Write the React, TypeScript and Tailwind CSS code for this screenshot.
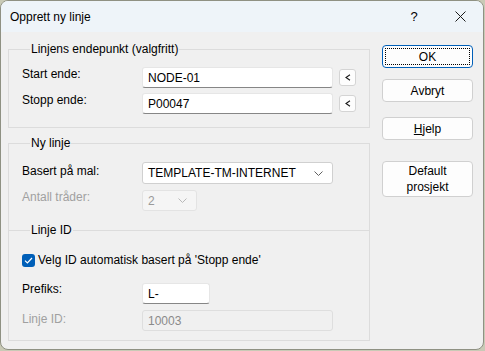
import React from "react"

const font = { fontFamily: '"Liberation Sans", Arial, sans-serif' }

function TextBox({ value, width, disabled }: { value: string; width: string; disabled?: boolean }) {
  if (disabled) {
    return (
      <div className={`${width} h-[21px] rounded-[3px] border border-[#dedede] bg-[#f0f0f0] px-[5px] flex items-center text-[12px] text-[#8a8a8a]`}>
        {value}
      </div>
    )
  }
  return (
    <div className={`${width} h-[21px] rounded-[3px] border border-[#e6e6e6] border-b-[#868686] bg-white px-[5px] flex items-center text-[12px] text-black`}>
      {value}
    </div>
  )
}

function Chevron({ color }: { color: string }) {
  return (
    <svg width="9" height="5" viewBox="0 0 9 5" fill="none">
      <path d="M0.5 0.5 L4.5 4.5 L8.5 0.5" stroke={color} strokeWidth="1" />
    </svg>
  )
}

function PickButton() {
  return (
    <div className="ml-[6px] mt-[2px] w-[17px] h-[17px] rounded-[3px] border border-[#d4d4d4] bg-[#fdfdfd] flex items-center justify-center">
      <svg width="6" height="7" viewBox="0 0 6 7">
        <path d="M5 0.8 L1 3.5 L5 6.2" stroke="#1a1a1a" strokeWidth="1.1" fill="none" />
      </svg>
    </div>
  )
}

function DlgButton({ children, h = "h-[23px]", focused }: { children: React.ReactNode; h?: string; focused?: boolean }) {
  return (
    <div
      className={`w-[91px] ${h} rounded-[4px] border bg-[#fdfdfd] flex items-center justify-center text-center text-[12px] leading-[16px] text-black p-[2px] ${
        focused ? "border-[#005fb8]" : "border-[#d0d0d0]"
      }`}
    >
      <div className={`w-full h-full flex items-center justify-center ${focused ? "border border-dotted border-black" : ""}`}>
        {children}
      </div>
    </div>
  )
}

export default function App() {
  return (
    <div className="w-[485px] h-[351px] bg-[#c9cab6]" style={font}>
      <div className="w-[484px] h-[350px] rounded-[8px] border border-[#8f9183] bg-[#f0f0f0] overflow-hidden flex flex-col">
        {/* Title bar */}
        <div className="h-[31px] bg-[#eef4f9] flex items-center pl-[9px] text-[12px] text-black shrink-0">
          <span className="flex-1">Opprett ny linje</span>
          <span className="w-[46px] text-center text-[13px]">?</span>
          <div className="w-[46px] flex justify-center">
            <svg width="11" height="11" viewBox="0 0 11 11">
              <path d="M0.5 0.5 L10.5 10.5 M10.5 0.5 L0.5 10.5" stroke="#1a1a1a" strokeWidth="1" />
            </svg>
          </div>
        </div>

        <div className="flex">
          {/* Left column */}
          <div className="pl-[7px] w-[369px] text-[12px] leading-[16px] text-black">
            <fieldset className="mt-[9px] border border-[#dcdcdc] pl-[13px] pb-[13px]">
              <legend className="ml-[8px] px-[1px]">Linjens endepunkt (valgfritt)</legend>
              <div className="mt-[10px] flex items-start">
                <span className="w-[120px] -mt-[1px]">Start ende:</span>
                <TextBox value="NODE-01" width="w-[191px]" />
                <PickButton />
              </div>
              <div className="mt-[5px] flex items-start">
                <span className="w-[120px] -mt-[1px]">Stopp ende:</span>
                <TextBox value="P00047" width="w-[191px]" />
                <PickButton />
              </div>
            </fieldset>

            <fieldset className="mt-[7px] h-[95px] border border-b-0 border-[#dcdcdc] pl-[13px]">
              <legend className="ml-[8px] px-[1px]">Ny linje</legend>
              <div className="mt-[11px] flex items-start">
                <span className="w-[120px] mt-[1px]">Basert på mal:</span>
                <div className="w-[191px] h-[22px] rounded-[3px] border border-[#d0d0d0] bg-white pl-[5px] pr-[9px] flex items-center justify-between">
                  <span>TEMPLATE-TM-INTERNET</span>
                  <Chevron color="#606060" />
                </div>
              </div>
              <div className="mt-[6px] flex items-start">
                <span className="w-[120px] -mt-[1px] text-[#a0a0a0]">Antall tråder:</span>
                <div className="w-[55px] h-[21px] rounded-[3px] border border-[#e3e3e3] bg-[#f5f5f5] pl-[5px] pr-[9px] flex items-center justify-between text-[#9a9a9a]">
                  <span>2</span>
                  <Chevron color="#b8b8b8" />
                </div>
              </div>
            </fieldset>

            <fieldset className="-mt-[8px] border border-[#dcdcdc] pl-[13px] pb-[9px]">
              <legend className="ml-[8px] px-[1px]">Linje ID</legend>
              <div className="mt-[14px] h-[16px] flex items-center gap-[3px]">
                <div className="w-[13px] h-[13px] rounded-[3px] bg-[#005fb8] flex items-center justify-center">
                  <svg width="9" height="7" viewBox="0 0 9 7">
                    <path d="M1 3.6 L3.4 6 L8 1" stroke="white" strokeWidth="1.2" fill="none" />
                  </svg>
                </div>
                <span>Velg ID automatisk basert på 'Stopp ende'</span>
              </div>
              <div className="mt-[15px] flex items-start">
                <span className="w-[120px] -mt-[2px]">Prefiks:</span>
                <TextBox value="L-" width="w-[68px]" />
              </div>
              <div className="mt-[6px] flex items-start">
                <span className="w-[120px] mt-[1px] text-[#a0a0a0]">Linje ID:</span>
                <TextBox value="10003" width="w-[191px]" disabled />
              </div>
            </fieldset>
          </div>

          {/* Right buttons */}
          <div className="ml-[12px] pt-[13px] flex flex-col">
            <DlgButton focused>OK</DlgButton>
            <div className="mt-[11px]">
              <DlgButton>Avbryt</DlgButton>
            </div>
            <div className="mt-[15px]">
              <DlgButton>
                <span>
                  <span className="underline">H</span>jelp
                </span>
              </DlgButton>
            </div>
            <div className="mt-[21px]">
              <DlgButton h="h-[36px]">
                <span>
                  Default
                  <br />
                  prosjekt
                </span>
              </DlgButton>
            </div>
          </div>
        </div>
      </div>
    </div>
  )
}
